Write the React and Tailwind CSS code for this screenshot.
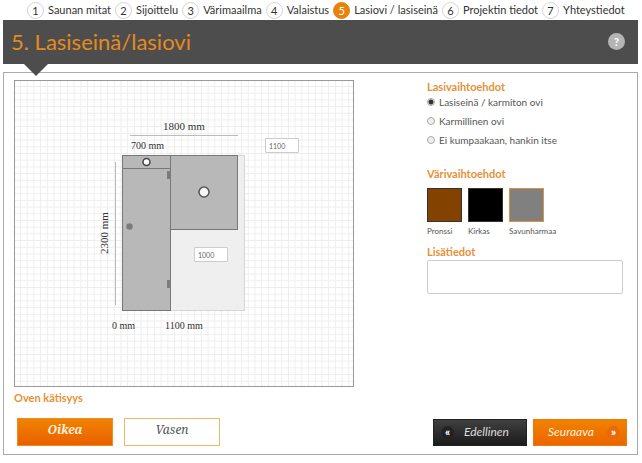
import { useState } from "react";

const STEPS = [
  "Saunan mitat",
  "Sijoittelu",
  "Värimaailma",
  "Valaistus",
  "Lasiovi / lasiseinä",
  "Projektin tiedot",
  "Yhteystiedot",
];

const DOOR_TYPES = [
  { id: "frameless", label: "Lasiseinä / karmiton ovi" },
  { id: "framed", label: "Karmillinen ovi" },
  { id: "none", label: "Ei kumpaakaan, hankin itse" },
];

const COLORS = [
  { id: "bronze", label: "Pronssi", swatch: "bg-[#834200]" },
  { id: "clear", label: "Kirkas", swatch: "bg-black" },
  { id: "smoke", label: "Savunharmaa", swatch: "bg-[#808080]" },
];

function StepNav({ current }) {
  return (
    <nav className="h-5 pl-6">
      <ol className="flex items-center gap-1">
        {STEPS.map((step, i) => (
          <li key={step}>
            <a href={`#step-${i + 1}`} className="flex items-center gap-1 whitespace-nowrap">
              <span
                className={`flex size-[17px] items-center justify-center rounded-full border text-[11px] leading-none ${
                  i + 1 === current
                    ? "border-[#e8820c] bg-[#e8820c] text-white"
                    : "border-[#d4d4d4] bg-white text-[#333]"
                }`}
              >
                {i + 1}
              </span>
              <span className="text-[11px] leading-5 text-[#333]">{step}</span>
            </a>
          </li>
        ))}
      </ol>
    </nav>
  );
}

function Heading({ children }) {
  return <h2 className="text-[11px] font-bold leading-4 text-[#e69138]">{children}</h2>;
}

function WallDrawing() {
  const [offset, setOffset] = useState("1100");
  const [height, setHeight] = useState("1000");
  const inputClass =
    "absolute h-[15px] w-[34px] rounded-[1px] border border-[#ccc] bg-white px-[3px] text-[7px] text-[#666] outline-none";

  return (
    <div className="relative border border-[#999]">
      <svg viewBox="0 0 338 305" className="block w-full" role="img" aria-label="Lasiseinä">
        <defs>
          <pattern id="grid" x="5" y="5" width="6.7" height="6.7" patternUnits="userSpaceOnUse">
            <path d="M0.5 0V6.7M0 0.5H6.7" stroke="#eee" fill="none" />
          </pattern>
        </defs>
        <rect width="338" height="305" fill="url(#grid)" />
        <path d="M115 54.5H223M100.5 81V224" stroke="#bbb" fill="none" />
        <rect x="155.5" y="74.5" width="74" height="155" fill="#efefef" stroke="#d6d6d6" />
        <rect x="107.5" y="74.5" width="48" height="155" fill="#b8b8b8" stroke="#777" />
        <rect x="155.5" y="74.5" width="67" height="74" fill="#b8b8b8" stroke="#777" />
        <path d="M107 87.5H155M155.5 74V230" stroke="#777" fill="none" />
        <circle cx="131.5" cy="81" r="3.5" fill="#fff" stroke="#444" strokeWidth="1.5" />
        <circle cx="189" cy="111" r="5" fill="#f5f5f5" stroke="#555" strokeWidth="1.5" />
        <circle cx="114.5" cy="145.5" r="3.2" fill="#7c7c7c" />
        <rect x="152" y="90" width="4" height="8" fill="#7c7c7c" />
        <rect x="152" y="199" width="4" height="8" fill="#7c7c7c" />
        <g fill="#333" className="font-['Liberation_Serif',serif]">
          <text x="148" y="49" fontSize="11">1800 mm</text>
          <text x="116" y="68" fontSize="10">700 mm</text>
          <text x="97" y="248" fontSize="10">0 mm</text>
          <text x="150" y="248" fontSize="10">1100 mm</text>
          <text transform="translate(93 173) rotate(-90)" fontSize="11">2300 mm</text>
        </g>
      </svg>
      <input
        aria-label="Etäisyys (mm)"
        value={offset}
        onChange={(e) => setOffset(e.target.value)}
        className={`${inputClass} left-[250px] top-[57px]`}
      />
      <input
        aria-label="Korkeus (mm)"
        value={height}
        onChange={(e) => setHeight(e.target.value)}
        className={`${inputClass} left-[179px] top-[166px]`}
      />
    </div>
  );
}

function HandButton({ active, onClick, children }) {
  return (
    <button
      type="button"
      aria-pressed={active}
      onClick={onClick}
      className={`h-7 w-24 border pb-1 font-['Noto_Serif','DejaVu_Serif','Liberation_Serif',serif] text-[12px] italic leading-4 ${
        active
          ? "border-[#f08a1c] bg-linear-to-b from-[#f08200] to-[#ea5f00] font-bold text-[#fff0dc]"
          : "border-[#f0b860] bg-white text-[#555]"
      }`}
    >
      {children}
    </button>
  );
}

function App() {
  const [doorType, setDoorType] = useState("frameless");
  const [color, setColor] = useState("smoke");
  const [hand, setHand] = useState("right");

  return (
    <div className="bg-white pl-[3px] pr-1 font-[Lato,sans-serif]">
      <StepNav current={5} />

      <header className="relative flex h-11 items-center justify-between bg-[#4d4d4d] pl-2 pr-[13px]">
        <h1 className="text-[22px] leading-8 text-[#e68a1e]">5. Lasiseinä/lasiovi</h1>
        <button
          type="button"
          aria-label="Ohje"
          className="mb-[2px] size-[17px] rounded-full bg-[#b4b4b4] text-[11px] font-black leading-[17px] text-white"
        >
          ?
        </button>
        <svg viewBox="0 0 24 12" className="absolute left-[21px] top-full h-3 w-6" aria-hidden="true">
          <path d="M0 0H24L12 12Z" fill="#4d4d4d" />
        </svg>
      </header>

      <main className="mt-2 border border-[#aaa] pb-2 pl-[10px] pr-[14px] pt-[6px]">
        <div className="flex items-start gap-[73px]">
          <div className="w-[340px] shrink-0 pt-px">
            <WallDrawing />
          </div>

          <div className="flex min-w-0 flex-1 flex-col">
            <Heading>Lasivaihtoehdot</Heading>
            <div className="-mt-px flex flex-col gap-[3px]">
              {DOOR_TYPES.map((type) => (
                <label key={type.id} className="flex h-4 items-center gap-1 whitespace-nowrap text-[10px] text-[#555]">
                  <input
                    type="radio"
                    name="doorType"
                    checked={doorType === type.id}
                    onChange={() => setDoorType(type.id)}
                    className="size-2 appearance-none rounded-full border border-[#aaa] bg-[#eee] checked:bg-[radial-gradient(circle,#333_0_2px,#eee_3px)]"
                  />
                  {type.label}
                </label>
              ))}
            </div>

            <div className="mt-[18px]">
              <Heading>Värivaihtoehdot</Heading>
            </div>
            <div className="mt-[6px] flex gap-[6px]">
              {COLORS.map((c) => (
                <button
                  key={c.id}
                  type="button"
                  aria-pressed={color === c.id}
                  onClick={() => setColor(c.id)}
                  className="w-[35px] text-left text-[8px] leading-3 text-[#555]"
                >
                  <span
                    className={`mb-[3px] block h-[34px] border ${c.swatch} ${
                      color === c.id ? "border-[#dc9440]" : "border-[#333]"
                    }`}
                  />
                  {c.label}
                </button>
              ))}
            </div>

            <label htmlFor="notes" className="mt-[7px] text-[11px] font-bold leading-4 text-[#e69138]">
              Lisätiedot
            </label>
            <textarea
              id="notes"
              className="h-[34px] w-full resize-none rounded-[2px] border border-[#ccc] bg-white p-1 text-[10px] outline-none"
            />
          </div>
        </div>

        <div className="mt-[3px]">
          <Heading>Oven kätisyys</Heading>
        </div>

        <div className="mt-3 flex items-center justify-between pl-[3px]">
          <div className="flex gap-[11px]">
            <HandButton active={hand === "right"} onClick={() => setHand("right")}>
              Oikea
            </HandButton>
            <HandButton active={hand === "left"} onClick={() => setHand("left")}>
              Vasen
            </HandButton>
          </div>
          <div className="-mr-1 flex gap-[6px] text-[12px] italic">
            <button
              type="button"
              className="flex h-[27px] w-[94px] items-center gap-[10px] border border-[#222] bg-linear-to-b from-[#404040] to-[#1c1c1c] pl-[7px] text-[#ddd]"
            >
              <span className="flex size-[13px] items-center justify-center rounded-full bg-[#222] pb-px text-[11px] font-black not-italic leading-none text-white">
                «
              </span>
              Edellinen
            </button>
            <button
              type="button"
              className="flex h-[27px] w-[94px] items-center justify-between border border-[#ee7a08] bg-linear-to-b from-[#f08200] to-[#ec6500] pl-[14px] pr-[6px] text-[#fff0dc]"
            >
              Seuraava
              <span className="flex size-[13px] items-center justify-center rounded-full bg-[#e86a08] pb-px text-[11px] font-black not-italic leading-none text-white">
                »
              </span>
            </button>
          </div>
        </div>
      </main>
    </div>
  );
}

export default App;
